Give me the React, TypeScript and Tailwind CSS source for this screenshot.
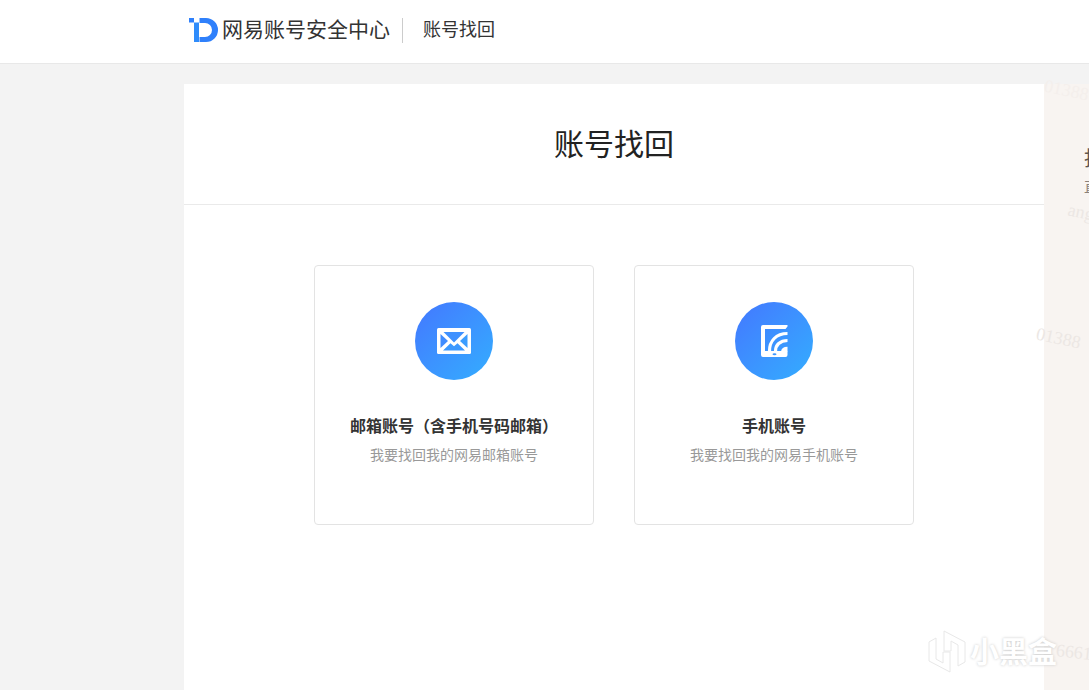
import React from 'react';

interface AccountOption {
  id: string;
  title: string;
  description: string;
  icon: React.ReactNode;
}

const BrandLogo = () => (
  <svg viewBox="0 0 30 26" className="h-[26px] w-[30px] shrink-0" aria-hidden="true">
    <rect x="1" y="1" width="5" height="4.500" fill="#2f80fb" />
    <path d="M6 5.500h5V25H6z" fill="#2f8cfb" />
    <path d="M11.500 1H18a12 12 0 0 1 0 24h-6.500v-5H17a7 7 0 0 0 0-14h-5.500z" fill="#2f80fb" />
  </svg>
);

const MailIcon = () => (
  <svg viewBox="0 0 34 26" className="h-[26px] w-[34px]" aria-hidden="true">
    <rect width="34" height="26" rx="1.500" fill="#fff" />
    <path d="M6.500 4h21L17 14.500z" fill="#3f91ff" />
    <path d="M3.500 6v14l7.500-7z" fill="#3f8cff" />
    <path d="M30.500 6v14L23 13z" fill="#3b9dff" />
    <path d="M6 22.500l7.500-7.200 3.500 3 3.500-3 7.500 7.200z" fill="#3b98ff" />
  </svg>
);

const PhoneIcon = () => (
  <svg viewBox="0 0 27 32" className="h-8 w-[27px]" fill="none" stroke="#fff" aria-hidden="true">
    <path
      d="M26.500 0v1.500l-2 2.500H4v22h22.500v4a2 2 0 0 1-2 2H2a2 2 0 0 1-2-2V2a2 2 0 0 1 2-2z"
      fill="#fff"
      stroke="none"
    />
    <path d="M8.500 26C8.500 16 15 8.500 26.500 8.500" strokeWidth="3.200" />
    <path d="M14.500 26c0-6 4.500-10.500 12-10.500" strokeWidth="3.200" />
    <path d="M20 26.500c.3-3 2.500-4.700 6.500-4.700v4.700z" fill="#fff" stroke="none" />
    <ellipse cx="13.500" cy="29.300" rx="2" ry="1" fill="#3b97ff" stroke="none" />
  </svg>
);

const HeyboxMark = () => (
  <svg viewBox="0 0 38 44" className="h-[44px] w-[38px]" aria-hidden="true">
    <path
      d="M1 12l7-4v21l7 4V22h7v20L1 31zM37 12L16 1v20h7V11l7 4v21l7-4z"
      fill="#fff"
      stroke="#e8e8e8"
      strokeLinejoin="round"
    />
  </svg>
);

const options: AccountOption[] = [
  {
    id: 'mail',
    title: '邮箱账号（含手机号码邮箱）',
    description: '我要找回我的网易邮箱账号',
    icon: <MailIcon />,
  },
  {
    id: 'phone',
    title: '手机账号',
    description: '我要找回我的网易手机账号',
    icon: <PhoneIcon />,
  },
];

const OptionCard: React.FC<{ option: AccountOption }> = ({ option }) => (
  <button
    type="button"
    className="flex h-[260px] w-[280px] flex-col items-center rounded border border-[#e3e3e3] bg-white pt-9 hover:border-[#3f8cff]"
  >
    <span className="flex size-[78px] items-center justify-center rounded-full bg-linear-to-br from-[#4377ff] to-[#33adff]">
      {option.icon}
    </span>
    <span className="mt-[33px] whitespace-nowrap text-base leading-6 font-bold text-[#333]">{option.title}</span>
    <span className="mt-[5px] text-sm leading-6 text-[#999]">{option.description}</span>
  </button>
);

export default function App() {
  return (
    <div className="relative flex min-h-screen flex-col overflow-hidden bg-[#f3f3f3] font-['Noto_Sans_CJK_SC',sans-serif] text-[#333]">
      <header className="flex h-16 items-center border-b border-[#e8e8e8] bg-white pb-[3px] pl-[188px]">
        <a href="#" className="flex items-center gap-1">
          <BrandLogo />
          <span className="pb-1 text-[21px] leading-8">网易账号安全中心</span>
        </a>
        <span className="ml-3 h-[25px] w-px bg-[#ccc]" />
        <span className="ml-5 pb-1 text-lg">账号找回</span>
      </header>

      <div className="mt-5 flex flex-1 pl-[184px]">
        <main className="flex-1 bg-white">
          <h1 className="border-b border-[#eaeaea] pt-[34px] pb-[38px] text-center text-3xl leading-[48px] text-[#222]">
            账号找回
          </h1>
          <div className="flex justify-center gap-10 pt-[60px]">
            {options.map((option) => (
              <OptionCard key={option.id} option={option} />
            ))}
          </div>
        </main>

        {/* Side notice, runs past the right edge */}
        <aside className="relative w-[45px] shrink-0 bg-[#f8f4f1] pt-[60px] pl-10 whitespace-nowrap">
          <p className="text-xl leading-7 text-[#5e554f]">找</p>
          <p className="text-sm leading-7 text-[#8a817b]">直</p>
          <div className="pointer-events-none absolute inset-0 font-['Liberation_Serif',serif] text-lg text-[#ece7e4]">
            <span className="absolute -top-2 left-0 rotate-12 text-[#f4efec]">01388</span>
            <span className="absolute top-[114px] left-6 rotate-12">ang</span>
            <span className="absolute top-[240px] -left-2 rotate-12">01388</span>
            <span className="absolute top-[554px] left-3 rotate-6">6661</span>
          </div>
        </aside>
      </div>

      {/* Watermark */}
      <div className="pointer-events-none absolute right-8 bottom-4 flex items-center gap-1">
        <HeyboxMark />
        <span className="pb-1 text-[29px] leading-10 font-bold text-white [text-shadow:0_0_3px_#c8c8c8]">小黑盒</span>
      </div>
    </div>
  );
}
